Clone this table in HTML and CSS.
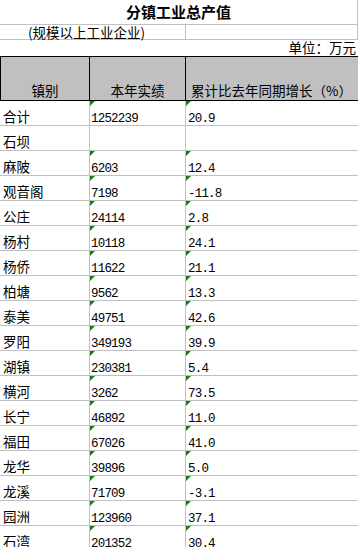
FILE: index.html
```html
<!DOCTYPE html>
<html lang="zh-CN">
<head>
<meta charset="utf-8">
<title>分镇工业总产值</title>
<link rel="stylesheet" href="styles.css">
</head>
<body>
<div class="sheet">
  <div class="title">分镇工业总产值</div>
  <div class="sub"><div class="sub-a">(规模以上工业企业)</div><div class="sub-b"></div></div>
  <div class="unit">单位：万元</div>
  <div class="head">
    <div class="hc hc-a">镇别</div>
    <div class="hc hc-b">本年实绩</div>
    <div class="hc hc-c">累计比去年同期增长（%）</div>
  </div>
  <div class="row"><div class="c name">合计</div><div class="c num mark">1252239</div><div class="c num numc mark">20.9</div></div>
  <div class="row"><div class="c name">石坝</div><div class="c num"></div><div class="c num numc"></div></div>
  <div class="row"><div class="c name">麻陂</div><div class="c num mark">6203</div><div class="c num numc mark">12.4</div></div>
  <div class="row"><div class="c name">观音阁</div><div class="c num mark">7198</div><div class="c num numc mark">-11.8</div></div>
  <div class="row"><div class="c name">公庄</div><div class="c num mark">24114</div><div class="c num numc mark">2.8</div></div>
  <div class="row"><div class="c name">杨村</div><div class="c num mark">10118</div><div class="c num numc mark">24.1</div></div>
  <div class="row"><div class="c name">杨侨</div><div class="c num mark">11622</div><div class="c num numc mark">21.1</div></div>
  <div class="row"><div class="c name">柏塘</div><div class="c num mark">9562</div><div class="c num numc mark">13.3</div></div>
  <div class="row"><div class="c name">泰美</div><div class="c num mark">49751</div><div class="c num numc mark">42.6</div></div>
  <div class="row"><div class="c name">罗阳</div><div class="c num mark">349193</div><div class="c num numc mark">39.9</div></div>
  <div class="row"><div class="c name">湖镇</div><div class="c num mark">230381</div><div class="c num numc mark">5.4</div></div>
  <div class="row"><div class="c name">横河</div><div class="c num mark">3262</div><div class="c num numc mark">73.5</div></div>
  <div class="row"><div class="c name">长宁</div><div class="c num mark">46892</div><div class="c num numc mark">11.0</div></div>
  <div class="row"><div class="c name">福田</div><div class="c num mark">67026</div><div class="c num numc mark">41.0</div></div>
  <div class="row"><div class="c name">龙华</div><div class="c num mark">39896</div><div class="c num numc mark">5.0</div></div>
  <div class="row"><div class="c name">龙溪</div><div class="c num mark">71709</div><div class="c num numc mark">-3.1</div></div>
  <div class="row"><div class="c name">园洲</div><div class="c num mark">123960</div><div class="c num numc mark">37.1</div></div>
  <div class="row"><div class="c name">石湾</div><div class="c num mark">201352</div><div class="c num numc mark">30.4</div></div>
</div>
</body>
</html>
```
FILE: styles.css
```css
body {
  margin: 0;
  background: #fff;
  color: #000;
  font-family: "Noto Sans CJK SC", sans-serif;
}
.sheet {
  width: 358px;
  overflow: hidden;
}
.title {
  height: 25px;
  box-sizing: border-box;
  border-bottom: 1px solid #c0c0c0;
  border-right: 1px solid #c0c0c0;
  text-align: center;
  font-weight: 700;
  font-size: 15px;
  line-height: 24px;
}
.sub {
  display: grid;
  grid-template-columns: 186px 172px;
  height: 15px;
  box-sizing: border-box;
  border-bottom: 1px solid #c0c0c0;
}
.sub-a {
  border-right: 1px solid #c0c0c0;
  padding-left: 28px;
  font-size: 13.5px;
  line-height: 15px;
  white-space: nowrap;
}
.sub-b {
  border-right: 1px solid #c0c0c0;
}
.unit {
  height: 16px;
  text-align: right;
  padding-right: 2px;
  font-size: 13.5px;
  line-height: 15px;
  white-space: nowrap;
}
.head {
  display: grid;
  grid-template-columns: 90px 96px 172px;
  height: 45px;
  box-sizing: border-box;
  background: #c0c0c0;
  border-top: 1px solid #000;
  border-bottom: 1px solid #000;
}
.hc {
  display: flex;
  align-items: flex-end;
  justify-content: center;
  box-sizing: border-box;
  border-right: 1px solid #000;
  font-size: 13.5px;
  line-height: 16px;
  padding-bottom: 2px;
  white-space: nowrap;
}
.hc-a {
  border-left: 1px solid #000;
}
.hc-c {
  justify-content: flex-start;
  padding-left: 5px;
  border-right: none;
}
.row {
  display: grid;
  grid-template-columns: 90px 96px 172px;
  height: 25px;
}
.c {
  position: relative;
  display: flex;
  align-items: flex-end;
  box-sizing: border-box;
  border-bottom: 1px solid #c0c0c0;
  border-right: 1px solid #c0c0c0;
  white-space: nowrap;
}
.c:last-child {
  border-right: none;
}
.name {
  padding-left: 3px;
  padding-bottom: 1px;
  font-size: 13.5px;
  line-height: 16px;
}
.num {
  padding-left: 1px;
  font-family: "Liberation Mono", monospace;
  font-size: 12.5px;
  letter-spacing: -0.8px;
  line-height: 12px;
}
.numc {
  padding-left: 2px;
}
.mark::before {
  content: "";
  position: absolute;
  top: 0;
  left: 0;
  border-top: 5px solid #1c7a1c;
  border-right: 5px solid transparent;
}
```
